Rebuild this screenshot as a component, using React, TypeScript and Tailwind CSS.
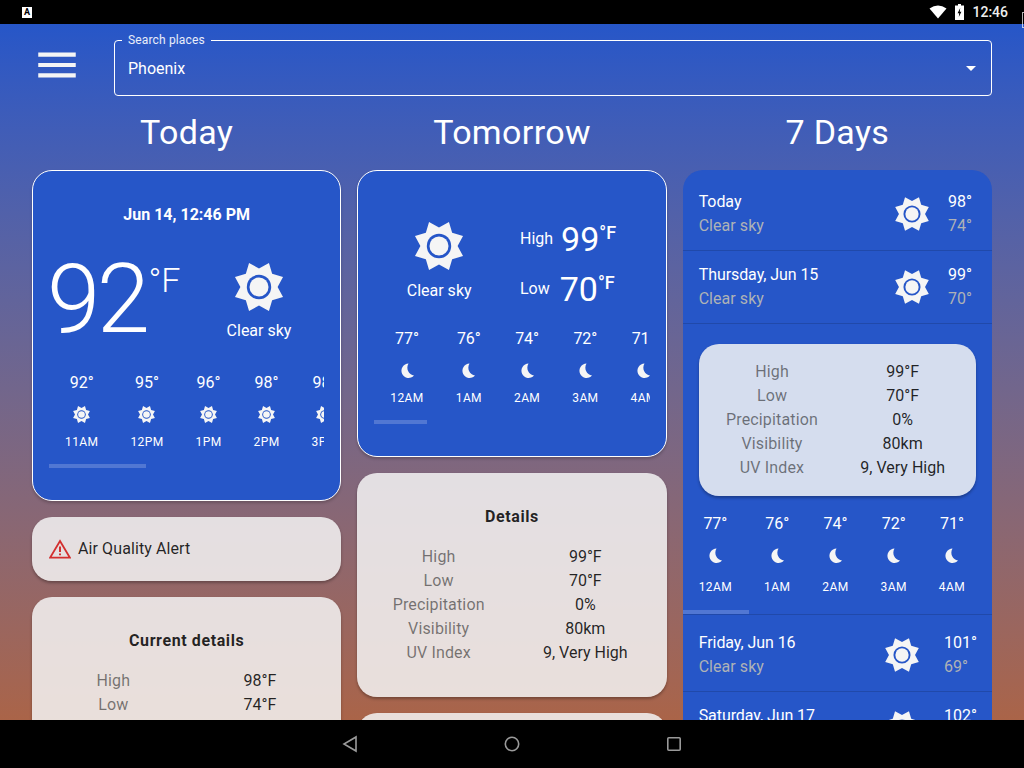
const BLUE = "#2656c8";

function Sun({ size }: { size: number }) {
  const pts: string[] = [];
  for (let i = 0; i < 16; i++) {
    const a = ((i * 22.5 - 22.5) * Math.PI) / 180;
    const r = i % 2 === 0 ? 26 : 18.6;
    pts.push(`${(r * Math.sin(a)).toFixed(2)},${(-r * Math.cos(a)).toFixed(2)}`);
  }
  return (
    <svg width={size} height={size} viewBox="-30 -30 60 60" className="shrink-0">
      <polygon points={pts.join(" ")} fill="#f5f5f5" />
      <circle r="12.2" fill={BLUE} />
      <circle r="9.5" fill="#f5f5f5" />
    </svg>
  );
}

function Moon() {
  return (
    <svg width="21" height="21" viewBox="0 0 21 21" className="shrink-0">
      <path d="M11.5 3.6 A7.2 7.2 0 1 0 17 15.6 A 8 8 0 0 1 11.5 3.6 Z" fill="#f5f5f5" />
    </svg>
  );
}

type H = { t: string; l: string };

function Hourly({ items, night, labelClass = "mt-[7px]" }: { items: H[]; night?: boolean; labelClass?: string }) {
  return (
    <div className="flex overflow-hidden">
      {items.map((h) => (
        <div key={h.l} className="flex shrink-0 flex-col items-center px-4">
          <div className="pt-[1px] text-base leading-6 text-white">{h.t}</div>
          <div className="mt-[9px] h-[21px]">{night ? <Moon /> : <Sun size={21} />}</div>
          <div className={`${labelClass} text-xs leading-5 tracking-[0.4px] text-white`}>{h.l}</div>
        </div>
      ))}
    </div>
  );
}

function Rows({ rows }: { rows: [string, string][] }) {
  return (
    <div className="grid grid-cols-2 gap-x-4 px-4 text-center text-base leading-6">
      {rows.map(([k, v]) => [
        <div key={k} className="tracking-[0.15px] text-black/50">{k}</div>,
        <div key={k + "v"} className="text-black/85">{v}</div>,
      ])}
    </div>
  );
}

function Day({ name, sub, hi, lo, pt = "pt-[12px]", wide, last }: { name: string; sub: string; hi: string; lo: string; pt?: string; wide?: boolean; last?: boolean }) {
  return (
    <div className={`flex items-center pb-[12px] pl-4 ${pt} ${last ? "" : "border-b border-black/15"} ${wide ? "pr-[15px]" : "pr-5"}`}>
      <div className="min-w-0 flex-1 text-base leading-6">
        <div className="tracking-[-0.07px] text-white">{name}</div>
        <div className="tracking-[0.05px] text-[#aeb2b6]">{sub}</div>
      </div>
      <Sun size={42} />
      <div className={`text-base leading-6 ${wide ? "ml-[21px]" : "ml-[15px]"}`}>
        <div className="text-white">{hi}</div>
        <div className="text-[#aeb2b6]">{lo}</div>
      </div>
    </div>
  );
}

const lightCard = "rounded-[20px] bg-[#f5f5f5]/85 shadow-[0_2px_3px_rgba(0,0,0,0.3)]";
const blueCard = "rounded-[20px] border border-white bg-[#2656c8] shadow-[0_2px_3px_rgba(0,0,0,0.2)]";
const title = "mb-[2px] text-center text-[34px] font-normal leading-10 tracking-[0.35px] text-white";
const detailTitle = "mb-4 text-center text-base font-bold leading-6 tracking-[0.6px] text-black/85";
const nightHours: H[] = [
  { t: "77°", l: "12AM" },
  { t: "76°", l: "1AM" },
  { t: "74°", l: "2AM" },
  { t: "72°", l: "3AM" },
  { t: "71°", l: "4AM" },
];
const tomorrowRows: [string, string][] = [
  ["High", "99°F"],
  ["Low", "70°F"],
  ["Precipitation", "0%"],
  ["Visibility", "80km"],
  ["UV Index", "9, Very High"],
];

export default function App() {
  return (
    <div className="relative flex h-screen w-full flex-col overflow-hidden bg-black font-['Roboto',sans-serif]">
      <div className="flex h-6 shrink-0 items-center bg-black pl-[22px] pr-4">
        <div className="flex h-[11px] w-[10px] items-center justify-center bg-white text-[9px] font-bold leading-none text-black">A</div>
        <div className="flex-1" />
        <svg width="18" height="14" viewBox="0 0 18 14" className="mr-[8px]">
          <path d="M0.5 3.6 Q9 -2.4 17.5 3.6 L9 13.6 Z" fill="#fff" />
        </svg>
        <svg width="9" height="16" viewBox="0 0 9 16" className="mr-[8px]">
          <path d="M3 0 H6 V1.5 H9 V16 H0 V1.5 H3 Z" fill="#fff" />
          <path d="M5.2 4 L2.6 9.2 H4.2 L3.8 13 L6.4 7.8 H4.8 Z" fill="#000" />
        </svg>
        <div className="text-sm font-medium leading-none text-[#eeeeee]">12:46</div>
      </div>

      <main className="h-[696px] shrink-0 overflow-hidden bg-gradient-to-b from-[#2656c8] to-[#aa6448] px-8">
        <div className="flex items-start pt-4">
          <svg width="50" height="50" viewBox="0 0 24 24" className="mr-[32px] shrink-0">
            <path d="M3 18h18v-2H3v2zm0-5h18v-2H3v2zm0-7v2h18V6H3z" fill="#f5f5f5" />
          </svg>
          <div className="relative flex h-14 flex-1 items-center px-[14px]">
            <fieldset className="absolute inset-x-0 bottom-0 top-[-5px] rounded border border-white pl-[7px]">
              <legend className="h-[11px] px-[6px] text-xs leading-[11px] tracking-[0.15px] text-white/90">Search places</legend>
            </fieldset>
            <span className="flex-1 pt-[2px] text-base text-white">Phoenix</span>
            <svg width="10" height="5" viewBox="0 0 10 5" className="mr-[2px]">
              <path d="M0 0 H10 L5 5 Z" fill="#fff" />
            </svg>
          </div>
        </div>

        <div className="mt-4 grid grid-cols-3 gap-4">
          <div className="flex min-w-0 flex-col gap-4">
            <h2 className={title}>Today</h2>
            <div className={`${blueCard} px-4 pb-8 pt-[32px]`}>
              <div className="text-center text-base font-bold leading-6 text-white">Jun 14, 12:46 PM</div>
              <div className="mt-[30px] flex h-[85px] items-start">
                <div className="ml-[-2px] flex w-[164px] items-start font-light text-white">
                  <span className="text-[96px] leading-[85px] tracking-[-3.5px]">92</span>
                  <span className="ml-[2px] mt-[3px] text-[34px] leading-10">°F</span>
                </div>
                <div className="flex w-[96px] flex-col items-center">
                  <Sun size={60} />
                  <div className="mt-[2px] text-base leading-6 text-white">Clear sky</div>
                </div>
              </div>
              <div className="mt-[28px]">
                <Hourly
                  items={[
                    { t: "92°", l: "11AM" },
                    { t: "95°", l: "12PM" },
                    { t: "96°", l: "1PM" },
                    { t: "98°", l: "2PM" },
                    { t: "98°", l: "3PM" },
                  ]}
                />
              </div>
              <div className="mt-[12px] h-1 w-[97px] bg-white/20" />
            </div>
            <div className={`${lightCard} flex h-16 items-center pl-[17px]`}>
              <svg width="22" height="20" viewBox="0 0 22 20" className="mr-[7px]">
                <path d="M11 2 L20.8 18.6 H1.2 Z" fill="none" stroke="#d32f2f" strokeWidth="1.8" />
                <path d="M10 7.5 H12 V13 H10 Z M10 14.4 H12 V16.3 H10 Z" fill="#d32f2f" />
              </svg>
              <span className="text-base tracking-[0.1px] text-black/85">Air Quality Alert</span>
            </div>
            <div className={`${lightCard} pb-8 pt-[32px]`}>
              <div className={detailTitle}>Current details</div>
              <Rows
                rows={[
                  ["High", "98°F"],
                  ["Low", "74°F"],
                  ["Precipitation", "0%"],
                ]}
              />
            </div>
          </div>

          <div className="flex min-w-0 flex-col gap-4">
            <h2 className={title}>Tomorrow</h2>
            <div className={`${blueCard} px-4 pb-8 pt-[42px]`}>
              <div className="grid grid-cols-2 gap-x-4">
                <div className="flex flex-col items-center pt-[3px]">
                  <Sun size={60} />
                  <div className="mt-[3px] text-base leading-6 text-white">Clear sky</div>
                </div>
                <div className="text-white">
                  <div className="flex h-[50px] items-center gap-[8px] pt-[2px]">
                    <span className="text-base">High</span>
                    <span className="flex items-start">
                      <span className="text-[34px] leading-10">99</span>
                      <span className="mt-[2px] text-[18px] font-medium leading-6">°F</span>
                    </span>
                  </div>
                  <div className="flex h-[50px] items-center gap-[10px] pt-[2px]">
                    <span className="text-base">Low</span>
                    <span className="flex items-start">
                      <span className="text-[34px] leading-10">70</span>
                      <span className="mt-[2px] text-[18px] font-medium leading-6">°F</span>
                    </span>
                  </div>
                </div>
              </div>
              <div className="mt-[13px]">
                <Hourly items={nightHours} night />
              </div>
              <div className="mt-[12px] h-1 w-[53px] bg-white/20" />
            </div>
            <div className={`${lightCard} pb-[32px] pt-[32px]`}>
              <div className={detailTitle}>Details</div>
              <Rows rows={tomorrowRows} />
            </div>
            <div className={`${lightCard} h-40`} />
          </div>

          <div className="flex min-w-0 flex-col gap-4">
            <h2 className={title}>7 Days</h2>
            <div className="rounded-[20px] bg-[#2656c8] pt-2">
              <Day name="Today" sub="Clear sky" hi="98°" lo="74°" />
              <Day name="Thursday, Jun 15" sub="Clear sky" hi="99°" lo="70°" />
              <div className="border-b border-black/15 pt-5">
                <div className={`${lightCard} mx-4 py-4`}>
                  <Rows rows={tomorrowRows} />
                </div>
                <div className="mt-[15px]">
                  <Hourly items={nightHours} night labelClass="mt-[11px]" />
                </div>
                <div className="mt-[13px] h-1 w-[66px] bg-white/20" />
              </div>
              <Day name="Friday, Jun 16" sub="Clear sky" hi="101°" lo="69°" pt="pt-[16px]" wide />
              <Day name="Saturday, Jun 17" sub="Clear sky" hi="102°" lo="70°" wide last />
            </div>
          </div>
        </div>
      </main>

      <div className="flex h-12 shrink-0 items-center justify-center gap-[146px] bg-black">
        <svg width="16" height="18" viewBox="0 0 16 18">
          <path d="M14 2 V16 L2 9 Z" fill="none" stroke="#9a9a9a" strokeWidth="1.6" />
        </svg>
        <svg width="16" height="16" viewBox="0 0 16 16">
          <circle cx="8" cy="8" r="6.7" fill="none" stroke="#9a9a9a" strokeWidth="1.6" />
        </svg>
        <svg width="16" height="16" viewBox="0 0 16 16">
          <rect x="1.8" y="1.8" width="12.4" height="12.4" rx="1" fill="none" stroke="#9a9a9a" strokeWidth="1.6" />
        </svg>
      </div>
      <div className="absolute right-0 top-[12px] h-4 w-[2px] border-b border-l border-t border-white/70" />
    </div>
  );
}
